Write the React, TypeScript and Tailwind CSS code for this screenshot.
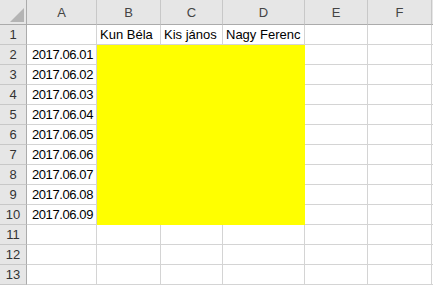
import React from "react";

const cols = ["A", "B", "C", "D", "E", "F"];
const names: Record<number, string[]> = {
  1: ["", "Kun Béla", "Kis jános", "Nagy Ferenc", "", ""],
};

function Cell({
  children,
  fill,
  align = "left",
  className = "",
}: {
  children?: React.ReactNode;
  fill?: boolean;
  align?: "left" | "right";
  className?: string;
}) {
  return (
    <div
      className={`h-[20px] flex items-end pb-[1px] px-[3px] overflow-visible whitespace-nowrap border-r border-b leading-[16px] text-[13px] text-black ${
        fill ? "bg-[#ffff00] border-[#ffff00]" : "bg-white border-[#d4d4d4]"
      } ${align === "right" ? "justify-end" : "justify-start"} ${className}`}
    >
      {children}
    </div>
  );
}

export default function App() {
  const rows = Array.from({ length: 13 }, (_, i) => i + 1);
  return (
    <div
      className="w-[433px] h-[287px] overflow-hidden bg-white"
      style={{ fontFamily: '"Liberation Sans", Arial, sans-serif' }}
    >
      <div className="grid grid-cols-[27px_70px_64px_62px_82px_63px_64px_1fr]">
        {/* header row */}
        <div className="h-[25px] relative bg-[#e6e6e6] border-r border-b border-[#ababab]">
          <svg className="absolute left-[10px] top-[8px]" width="14" height="14" viewBox="0 0 14 14">
            <polygon points="14,0 14,14 0,14" fill="#b4b4b4" />
          </svg>
        </div>
        {cols.map((c) => (
          <div
            key={c}
            className="h-[25px] flex items-center justify-center pt-[2px] bg-[#e6e6e6] border-r border-b border-r-[#c8c8c8] border-b-[#ababab] text-[13px] text-[#444]"
          >
            {c}
          </div>
        ))}
        <div className="h-[25px] bg-[#e6e6e6] border-b border-[#ababab]" />

        {rows.map((r) => {
          const filled = r >= 2 && r <= 10;
          const date = filled ? `2017.06.0${r - 1}` : "";
          const vals = names[r] ?? [date, "", "", "", "", ""];
          return (
            <React.Fragment key={r}>
              <div className="h-[20px] flex items-center justify-center pt-[1px] bg-[#e6e6e6] border-r border-b border-r-[#ababab] border-b-[#c8c8c8] text-[13px] text-[#333]">
                {r}
              </div>
              <Cell align="right">
                <span className="tracking-[-0.4px]">{vals[0]}</span>
              </Cell>
              <Cell fill={filled}>{vals[1]}</Cell>
              <Cell fill={filled}>{vals[2]}</Cell>
              <Cell fill={filled}>{vals[3]}</Cell>
              <Cell>{vals[4]}</Cell>
              <Cell>{vals[5]}</Cell>
              <div className="h-[20px] bg-white border-b border-[#d4d4d4]" />
            </React.Fragment>
          );
        })}
      </div>
    </div>
  );
}
